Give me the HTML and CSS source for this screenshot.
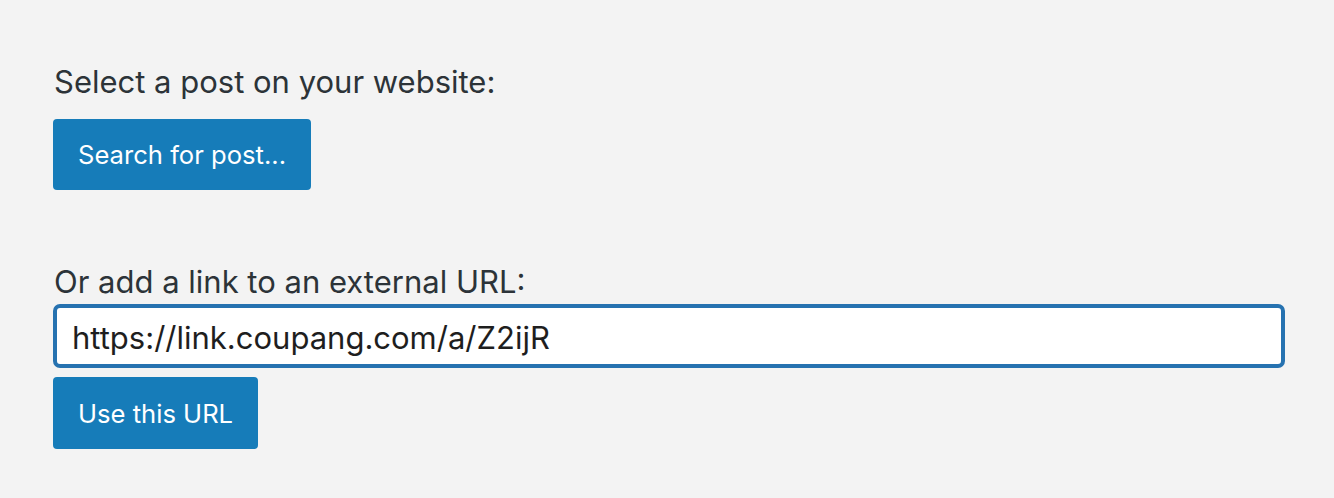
FILE: index.html
```html
<!DOCTYPE html>
<html>
<head>
<meta charset="utf-8">
<link rel="stylesheet" href="styles.css">
</head>
<body>
<div class="panel">
  <div class="section">
    <label class="label">Select a post on your website:</label>
    <button class="btn btn-search">Search for post...</button>
  </div>
  <div class="section section-url">
    <label class="label">Or add a link to an external URL:</label>
    <input class="url-input" type="text" value="https://link.coupang.com/a/Z2ijR">
    <button class="btn btn-url">Use this URL</button>
  </div>
</div>
</body>
</html>
```
FILE: styles.css
```css
html, body {
  margin: 0;
  padding: 0;
  background: #f3f3f3;
}
body {
  font-family: Inter, "Noto Sans", sans-serif;
  color: #2c3338;
}
.panel {
  padding: 63px 49px 0 53px;
  display: flex;
  flex-direction: column;
}
.section {
  display: flex;
  flex-direction: column;
  align-items: flex-start;
}
.section-url {
  margin-top: 73px;
  align-items: stretch;
}
.label {
  font-size: 31px;
  line-height: 38px;
  margin-left: 1px;
  margin-bottom: 18px;
}
.section-url .label {
  margin-bottom: 3px;
}
.btn {
  font-family: Inter, "Noto Sans", sans-serif;
  background: #167cb9;
  color: #fff;
  border: none;
  border-radius: 4px;
  font-size: 25.6px;
  height: 71px;
  padding: 0 25px;
  cursor: pointer;
}
.btn-url {
  align-self: flex-start;
  margin-top: 9px;
  height: 72px;
}
.url-input {
  height: 64px;
  box-sizing: border-box;
  border: 4px solid #2672b0;
  border-radius: 7px;
  background: #fff;
  font-family: Inter, "Noto Sans", sans-serif;
  font-size: 31px;
  color: #1e1e1e;
  padding: 2px 16px 0 15px;
  outline: none;
}
```
